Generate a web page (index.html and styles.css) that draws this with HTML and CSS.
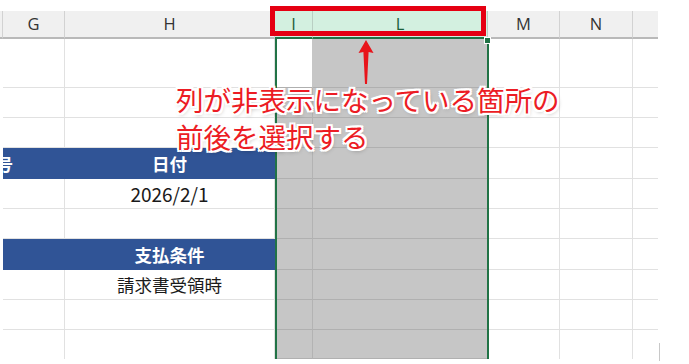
FILE: index.html
```html
<!DOCTYPE html>
<html>

<head lang="ja">
    <meta charset="UTF-8">
    <title>列の再表示</title>
    <link rel="stylesheet" href="styles.css">
</head>

<body>
    <div class="sheet">
        <div class="grid">
            <div class="row hdr">
                <div class="cell c0"></div>
                <div class="cell cg">G</div>
                <div class="cell ch">H</div>
                <div class="cell ci on">I</div>
                <div class="cell cl on">L</div>
                <div class="cell cm">M</div>
                <div class="cell cn">N</div>
                <div class="cell co"></div>
            </div>

            <div class="row tall">
                <div class="cell c0"></div>
                <div class="cell cg"></div>
                <div class="cell ch"></div>
                <div class="cell ci active"></div>
                <div class="cell cl sel"></div>
                <div class="cell cm"></div>
                <div class="cell cn"></div>
                <div class="cell co"></div>
            </div>

            <div class="row">
                <div class="cell c0"></div>
                <div class="cell cg"></div>
                <div class="cell ch"></div>
                <div class="cell ci sel"></div>
                <div class="cell cl sel"></div>
                <div class="cell cm"></div>
                <div class="cell cn"></div>
                <div class="cell co"></div>
            </div>

            <div class="row">
                <div class="cell c0"></div>
                <div class="cell cg"></div>
                <div class="cell ch"></div>
                <div class="cell ci sel"></div>
                <div class="cell cl sel"></div>
                <div class="cell cm"></div>
                <div class="cell cn"></div>
                <div class="cell co"></div>
            </div>

            <!-- 見出し行 -->
            <div class="row r31">
                <div class="cell c0"></div>
                <div class="cell cg blue clip"><span class="cut">番号</span></div>
                <div class="cell ch blue">日付</div>
                <div class="cell ci sel"></div>
                <div class="cell cl sel"></div>
                <div class="cell cm"></div>
                <div class="cell cn"></div>
                <div class="cell co"></div>
            </div>

            <div class="row">
                <div class="cell c0"></div>
                <div class="cell cg"></div>
                <div class="cell ch val num">2026/2/1</div>
                <div class="cell ci sel"></div>
                <div class="cell cl sel"></div>
                <div class="cell cm"></div>
                <div class="cell cn"></div>
                <div class="cell co"></div>
            </div>

            <div class="row">
                <div class="cell c0"></div>
                <div class="cell cg"></div>
                <div class="cell ch"></div>
                <div class="cell ci sel"></div>
                <div class="cell cl sel"></div>
                <div class="cell cm"></div>
                <div class="cell cn"></div>
                <div class="cell co"></div>
            </div>

            <div class="row r31">
                <div class="cell c0"></div>
                <div class="cell cg blue"></div>
                <div class="cell ch blue">支払条件</div>
                <div class="cell ci sel"></div>
                <div class="cell cl sel"></div>
                <div class="cell cm"></div>
                <div class="cell cn"></div>
                <div class="cell co"></div>
            </div>

            <div class="row">
                <div class="cell c0"></div>
                <div class="cell cg"></div>
                <div class="cell ch val">請求書受領時</div>
                <div class="cell ci sel"></div>
                <div class="cell cl sel"></div>
                <div class="cell cm"></div>
                <div class="cell cn"></div>
                <div class="cell co"></div>
            </div>

            <div class="row">
                <div class="cell c0"></div>
                <div class="cell cg"></div>
                <div class="cell ch"></div>
                <div class="cell ci sel"></div>
                <div class="cell cl sel"></div>
                <div class="cell cm"></div>
                <div class="cell cn"></div>
                <div class="cell co"></div>
            </div>

            <div class="row last">
                <div class="cell c0"></div>
                <div class="cell cg"></div>
                <div class="cell ch"></div>
                <div class="cell ci sel"></div>
                <div class="cell cl sel"></div>
                <div class="cell cm"></div>
                <div class="cell cn"></div>
                <div class="cell co"></div>
            </div>
        </div>

        <!-- 選択範囲の枠 -->
        <div class="sel-frame"></div>
        <div class="handle"></div>
        <div class="scroll-edge"></div>

        <!-- 注釈 -->
        <div class="mark-box"></div>
        <svg class="arrow" width="20" height="50" viewBox="0 0 20 50">
            <polygon points="10,2 17.5,15 12.6,14 11,46 9,46 7.4,14 2.5,15" fill="#e8141b" />
        </svg>
        <div class="note">列が非表示になっている箇所の<br>前後を選択する</div>
    </div>
</body>

</html>
```

FILE: styles.css
```css
body {
    margin: 0;
    background: #ffffff;
    font-family: "Noto Sans CJK JP", "Noto Sans", sans-serif;
}

.sheet {
    position: relative;
    width: 689px;
    height: 364px;
    overflow: hidden;
}

.grid {
    padding-top: 11px;
    width: 658px;
}

.row {
    display: flex;
    height: 30px;
}

.row.hdr {
    height: 28px;
}

.row.tall {
    height: 49px;
}

.row.r31 {
    height: 31px;
}

.row.last {
    height: 29px;
}

.cell {
    box-sizing: border-box;
    height: 100%;
    display: flex;
    align-items: center;
    justify-content: center;
    border-right: 1px solid #e1e1e1;
    border-bottom: 1px solid #e1e1e1;
    font-size: 17.5px;
    color: #222222;
}

.c0 { width: 3px; border: none; }
.cg { width: 62px; }
.ch { width: 210px; }
.ci { width: 38px; }
.cl { width: 175px; }
.cm { width: 72px; }
.cn { width: 73px; }
.co { width: 25px; border-right: none; }

.last .cell {
    border-bottom: none;
}

/* 列見出し */
.hdr .cell {
    background: #f0f0f0;
    border-right: 1px solid #d2d2d2;
    border-bottom: 2px solid #b9b9b9;
    font-family: "Open Sans", "Liberation Sans", sans-serif;
    font-size: 16.5px;
    color: #333333;
    padding-bottom: 1px;
}

.hdr .c0 {
    border-right: 1px solid #d2d2d2;
}

.hdr .co {
    border-right: none;
}

.hdr .cell.on {
    background: #d3f0e0;
    border-right: 1px solid #b9cfc3;
    border-bottom: 2px solid #217346;
    color: #1c5f3a;
}

/* 選択範囲 */
.cell.sel {
    background: #c6c6c6;
    border-right: 1px solid #b3b3b3;
    border-bottom: 1px solid #b0b0b0;
}

.cell.active {
    background: #ffffff;
    border-right: 1px solid #c6c6c6;
    border-bottom: 1px solid #b0b0b0;
}

.cell.blue {
    background: #305496;
    border-right-color: #305496;
    border-bottom-color: #305496;
    color: #ffffff;
    font-weight: bold;
    padding-top: 1px;
}

.cell.clip {
    justify-content: flex-start;
    overflow: hidden;
}

.cut {
    margin-left: -25px;
    white-space: nowrap;
}

.cell.val {
    color: #1a1a1a;
}

.cell.num {
    font-size: 19px;
}

.sel-frame {
    position: absolute;
    left: 275px;
    top: 38px;
    width: 214px;
    height: 321px;
    box-sizing: border-box;
    border-left: 2px solid #217346;
    border-right: 2px solid #217346;
}

.handle {
    position: absolute;
    left: 484px;
    top: 37px;
    width: 5px;
    height: 5px;
    background: #217346;
    border: 1px solid #ffffff;
}

.scroll-edge {
    position: absolute;
    left: 659px;
    top: 343px;
    width: 1px;
    height: 18px;
    background: #c8c8c8;
}

.mark-box {
    position: absolute;
    left: 270px;
    top: 6px;
    width: 216px;
    height: 30px;
    box-sizing: border-box;
    border: 5px solid #e50012;
}

.arrow {
    position: absolute;
    left: 356px;
    top: 38px;
}

.note {
    position: absolute;
    left: 176px;
    top: 81px;
    font-size: 27.5px;
    line-height: 37px;
    color: #ec1c24;
    white-space: nowrap;
    text-shadow:
        2px 0 0 #ffffff, -2px 0 0 #ffffff, 0 2px 0 #ffffff, 0 -2px 0 #ffffff,
        2px 2px 0 #ffffff, -2px -2px 0 #ffffff, 2px -2px 0 #ffffff, -2px 2px 0 #ffffff,
        1px 2px 4px rgba(0, 0, 0, 0.35);
}
```
